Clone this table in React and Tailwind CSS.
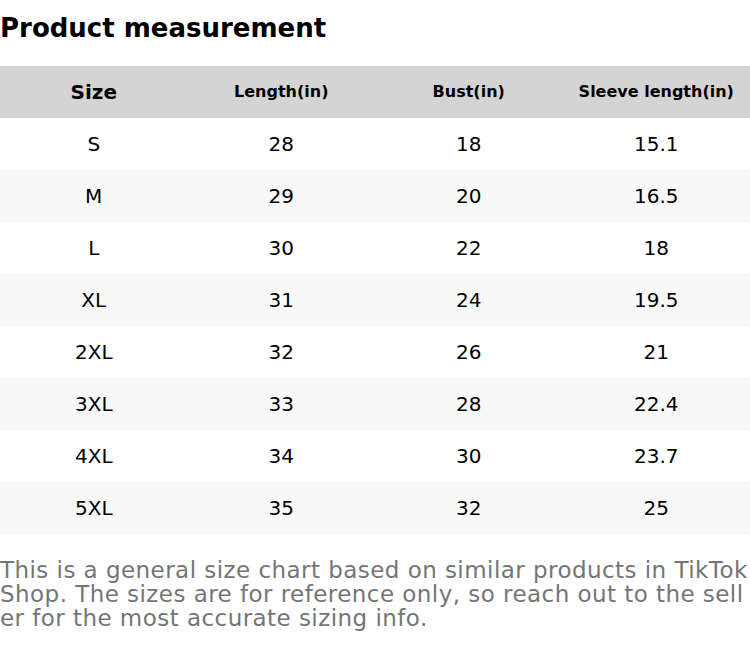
const rows = [
  ["S", "28", "18", "15.1"],
  ["M", "29", "20", "16.5"],
  ["L", "30", "22", "18"],
  ["XL", "31", "24", "19.5"],
  ["2XL", "32", "26", "21"],
  ["3XL", "33", "28", "22.4"],
  ["4XL", "34", "30", "23.7"],
  ["5XL", "35", "32", "25"],
];

export default function App() {
  return (
    <div className="w-[750px] h-[654px] bg-white text-black font-['DejaVu_Sans',sans-serif]">
      <h1 className="h-[66px] flex items-center pb-[10px] text-[26px] font-bold leading-none">
        Product measurement
      </h1>

      <div className="grid grid-cols-4 h-[52px] bg-[#d4d4d4] items-center text-center font-bold">
        <div className="text-[20px]">Size</div>
        <div className="text-[16px]">Length(in)</div>
        <div className="text-[16px]">Bust(in)</div>
        <div className="text-[16px]">Sleeve length(in)</div>
      </div>

      {rows.map((r, i) => (
        <div
          key={r[0]}
          className={
            "grid grid-cols-4 h-[52px] items-center text-center text-[20px] " +
            (i % 2 ? "bg-[#f8f8f8]" : "bg-white")
          }>
          {r.map((v, j) => (
            <div key={j}>{v}</div>
          ))}
        </div>
      ))}

      <p className="mt-[24px] text-[23px] leading-[24px] tracking-[0.45px] text-[#757575] break-all">
        This is a general size chart based on similar products in TikTok Shop. The sizes are for reference only, so reach out to the seller for the most accurate sizing info.
      </p>
    </div>
  );
}
